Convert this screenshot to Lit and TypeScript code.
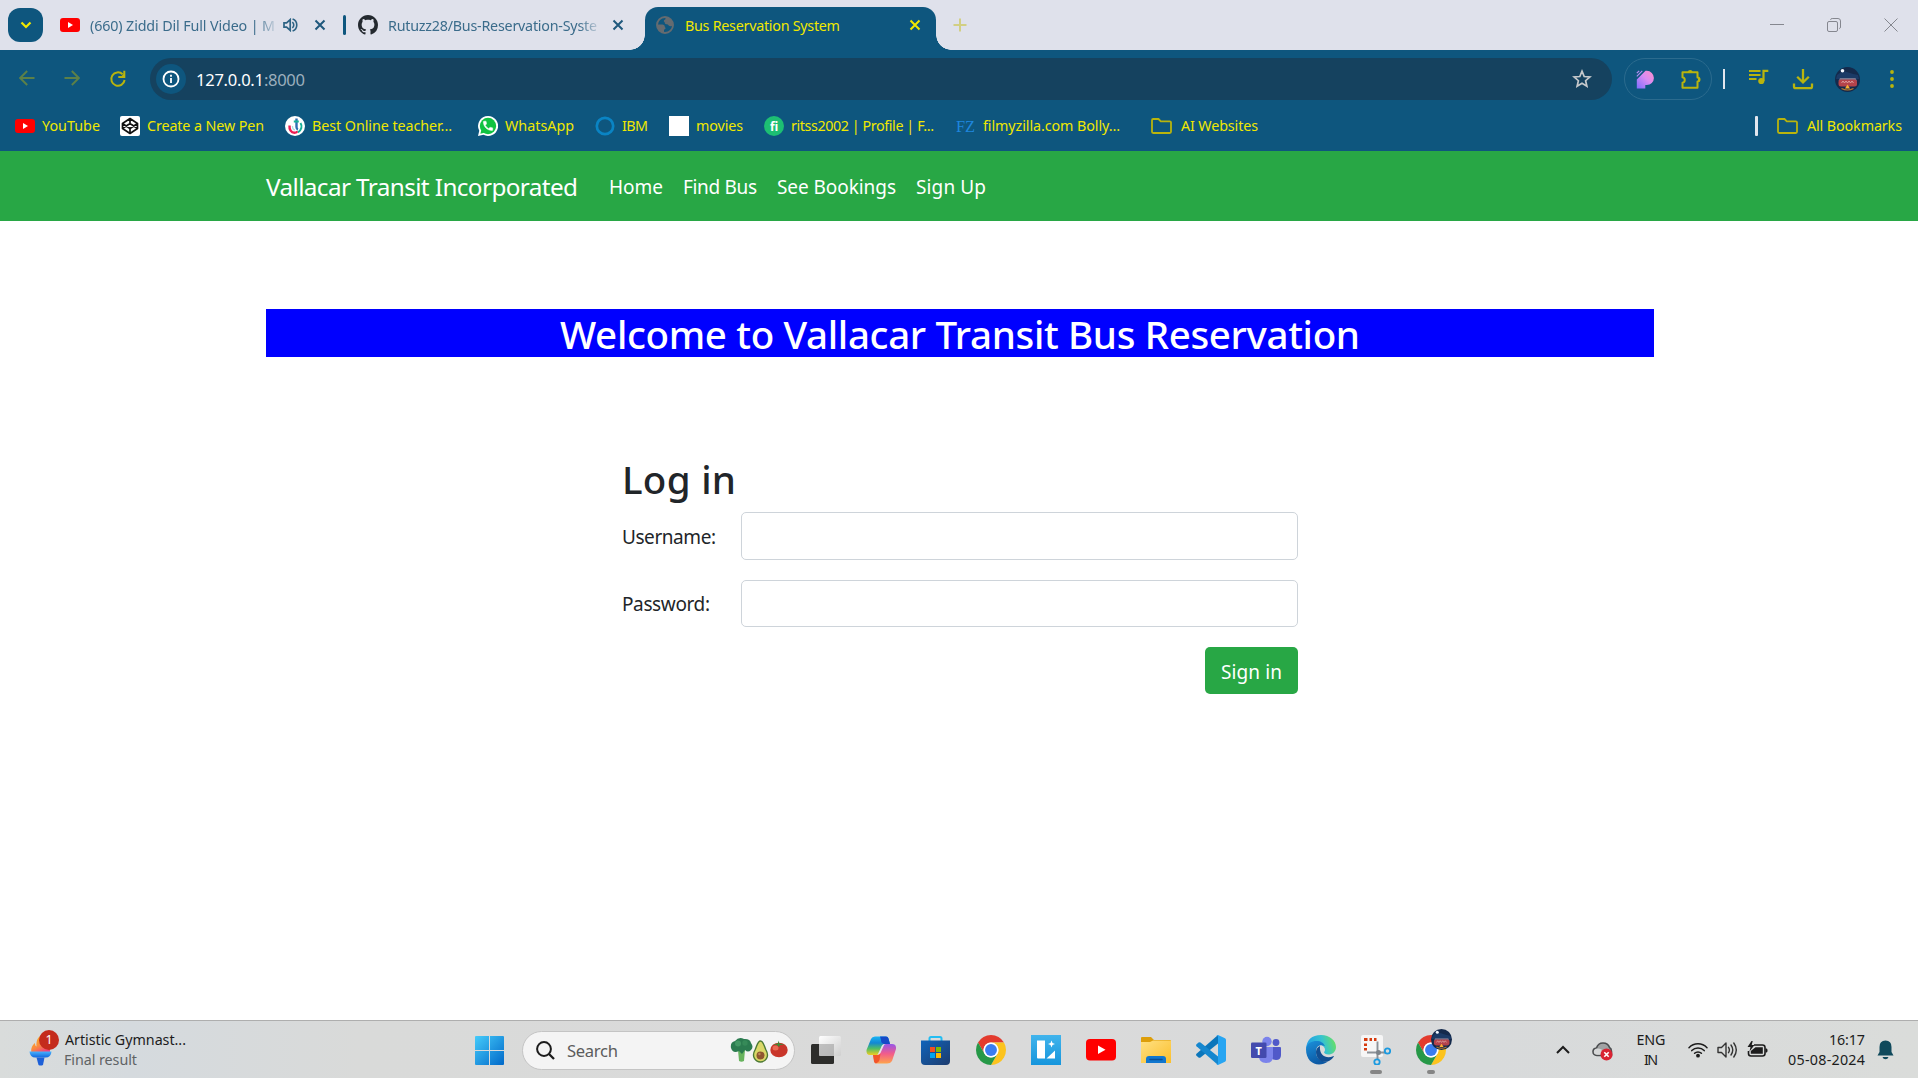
import { LitElement, html, css, svg, nothing } from "lit";
import type { PropertyValues, TemplateResult } from "lit";
import { customElement, property } from "lit/decorators.js";
import { classMap } from "lit/directives/class-map.js";

/* A single line of text whose tracking is adjusted so that it fills a given width. */
@customElement("ui-text")
class UiText extends LitElement {
  @property({ type: Number }) w = 0;
  @property() text = "";
  static styles = css`
    :host { display: block; white-space: nowrap; flex: none; }
    .line { display: inline-block; white-space: pre; }
  `;
  protected updated(_: PropertyValues) {
    const line = this.renderRoot.querySelector(".line") as HTMLElement;
    line.style.letterSpacing = "0px";
    this.style.width = `${this.w}px`;
    const natural = line.getBoundingClientRect().width;
    const steps = Math.max(1, this.text.length - 1);
    line.style.letterSpacing = `${(this.w - natural) / steps}px`;
  }
  render() {
    return html`<span class="line">${this.text}</span>`;
  }
}

const t = (text: string, w: number, cls = "") => html`<ui-text class=${cls} .text=${text} .w=${w}></ui-text>`;
const icon = (w: number, h: number, box: string, body: unknown, cls = "") =>
  html`<svg class=${"icon " + cls} width=${w} height=${h} viewBox=${box} fill="none">${body}</svg>`;

const youtube = (w = 20, h = 14) => icon(w, h, "0 0 20 14", svg`
  <rect width="20" height="14" rx="3" fill="#f00"/><path d="M8 4v6l5-3z" fill="#fff"/>`);

const github = icon(20, 20, "0 0 16 16", svg`<path fill="#24292f" d="M8 0C3.58 0 0 3.58 0 8c0 3.54 2.29 6.53 5.47 7.59.4.07.55-.17.55-.38 0-.19-.01-.82-.01-1.49-2.01.37-2.53-.49-2.69-.94-.09-.23-.48-.94-.82-1.13-.28-.15-.68-.52-.01-.53.63-.01 1.08.58 1.23.82.72 1.21 1.87.87 2.33.66.07-.52.28-.87.51-1.07-1.78-.2-3.64-.89-3.64-3.95 0-.87.31-1.59.82-2.15-.08-.2-.36-1.02.08-2.12 0 0 .67-.21 2.2.82.64-.18 1.32-.27 2-.27s1.36.09 2 .27c1.53-1.04 2.2-.82 2.2-.82.44 1.1.16 1.92.08 2.12.51.56.82 1.27.82 2.15 0 3.07-1.87 3.75-3.65 3.95.29.25.54.73.54 1.48 0 1.07-.01 1.93-.01 2.2 0 .21.15.46.55.38A8.01 8.01 0 0 0 16 8c0-4.42-3.58-8-8-8z"/>`);

const cross = (c: string) => icon(12, 12, "0 0 12 12", svg`<path d="M1.5 1.5l9 9M10.5 1.5l-9 9" stroke=${c} stroke-width="2"/>`);

const speaker = icon(15, 14, "0 0 15 14", svg`
  <path d="M1 4.8h2.6L7.2 1.6v10.8L3.6 9.2H1z" stroke="#2d6384" stroke-width="1.7"/>
  <path d="M9.3 4.2a3.4 3.4 0 0 1 0 5.6M9.6 1a6.4 6.4 0 0 1 0 12" stroke="#2d6384" stroke-width="1.6"/>`);

const globe = icon(18, 18, "0 0 18 18", svg`
  <circle cx="9" cy="9" r="8" stroke="#656b70" stroke-width="1.9"/>
  <path d="M1.2 8.5h5.2c1.5 0 2.4 1 2.4 2.2 0 .8.8.6.8 1.5 0 1-1.6.8-1.6 2v2.4C4 17 .8 13 1.200 8.500z" fill="#656b70"/>
  <path d="M9.500 1.200v1.600c0 1.200-1.700.9-1.700 2.100 0 .9 1 1 1 1.800 0 1 1 1.500 2.100 1.500 1.400 0 1.600 1.400 2.700 1.900 1 .4 2.300-.2 3.200-.6C17.200 4.500 14 1.200 9.500 1.200z" fill="#656b70"/>`);

const OLIVE = "#b9b40d";

const arrow = (flip: boolean) => icon(16, 16, "0 0 16 16",
  svg`<path transform=${flip ? "matrix(-1 0 0 1 16 0)" : ""} d="M15.500 8H1.500M8.200 1L1.200 8l7 7" stroke="#5c8048" stroke-width="1.900"/>`);

const reload = icon(18, 18, "0 0 18 18", svg`
  <path d="M13.600 4.200A6.700 6.700 0 1 0 15.600 10" stroke=${OLIVE} stroke-width="2"/>
  <path d="M15.300 .800v6.200H9.300" stroke=${OLIVE} stroke-width="2"/><path d="M15 3.500v3.200h-3.200z" fill=${OLIVE}/>`);

const info = icon(18, 18, "0 0 18 18", svg`
  <circle cx="9" cy="9" r="7.500" stroke="#fff" stroke-width="1.800"/>
  <path d="M9 8v5M9 4.800v2" stroke="#fff" stroke-width="1.800"/>`);

const star = icon(20, 20, "0 0 20 20", svg`
  <path d="M10 2.200l2.200 5.300 5.700.500-4.300 3.700 1.300 5.600L10 14.300l-4.900 3 1.300-5.600L2.100 8l5.700-.5z" stroke="#c6c9cc" stroke-width="1.700"/>`);

const pixelP = icon(18, 19, "0 0 18 19", svg`
  <defs><linearGradient id="pp" x1="1" y1="0" x2="0" y2="1"><stop offset="0" stop-color="#ff8fc9"/><stop offset=".45" stop-color="#d98cf2"/><stop offset="1" stop-color="#7d6cff"/></linearGradient></defs>
  <path d="M9.500.800h1.300a6.900 6.900 0 0 1 0 14.200H9.300v3.500H.800V9.500z" fill="url(#pp)"/>
  <path d="M.800 3.200L3.200.800M.800 6.300L6.300.800" stroke="#b58df5" stroke-width="1.200"/>`);

const puzzle = icon(22, 22, "0 0 22 22", svg`
  <path d="M2.500 4.300h15v5.200a2 2 0 0 1 0 4v6.200h-15v-4.900a2.800 2.800 0 0 0 0-5.500z" stroke=${OLIVE} stroke-width="2" stroke-linejoin="round"/>
  <path d="M7.600 4a2.700 2.700 0 0 1 5.200 0zM18 9a2.600 2.600 0 0 1 0 5z" fill=${OLIVE}/>`);

const queue = icon(21, 16, "0 0 21 16", svg`
  <path d="M1 2h11.500M1 6h11.500M1 10h7.500" stroke=${OLIVE} stroke-width="2"/>
  <circle cx="13.300" cy="12" r="3.100" fill=${OLIVE}/><path d="M15.500 12V1.900h4.800" stroke=${OLIVE} stroke-width="2.200"/>`);

const download = icon(22, 21, "0 0 22 21", svg`
  <path d="M11 0v13M5.200 7.800L11 13.500l5.800-5.700" stroke=${OLIVE} stroke-width="2.300"/>
  <path d="M2 14.500v3q0 1.700 1.700 1.700h14.600q1.700 0 1.700-1.700v-3" stroke=${OLIVE} stroke-width="2.300"/>`);

const avatar = (s: number) => icon(s, s, "0 0 25 25", svg`
  <circle cx="12.500" cy="12.500" r="12.500" fill="#142a4c"/>
  <path d="M2 8q5-5 10-3t11 3l1 4H1z" fill="#1b3a66"/>
  <circle cx="7.500" cy="3.800" r="1.800" fill="#f4f8ff"/>
  <path d="M5 11h15.500l1.500 3H3.500z" fill="#75768f"/>
  <rect x="3.500" y="12.500" width="18.500" height="7" rx="2.500" fill="#b5434b"/>
  <path d="M6.500 16l1.500-2 1.500 2 1.500-2 1.500 2 1.500-2 1.500 2 1.500-2 1.500 2" stroke="#e0a3a2" stroke-width=".9"/>
  <path d="M10 21.500l2.500-4 2.500 4z" fill="#ffb02e"/><path d="M6.500 21.500q6 3 12 0" stroke="#b97a2c" stroke-width="1.200"/>`);

const dots = icon(6, 20, "0 0 6 20", svg`<g fill=${OLIVE}><circle cx="3" cy="3" r="1.900"/><circle cx="3" cy="10" r="1.900"/><circle cx="3" cy="17" r="1.900"/></g>`);

const folder = icon(21, 16, "0 0 21 16", svg`
  <path d="M1 2.200Q1 1 2.200 1h5.300l2.300 2.300h9Q20 3.300 20 4.500v9.300q0 1.200-1.200 1.200H2.200Q1 15 1 13.800z" stroke=${OLIVE} stroke-width="1.800"/>`);

const codepen = icon(20, 20, "0 0 20 20", svg`
  <rect width="20" height="20" rx="2" fill="#fff"/>
  <path d="M10 2.500l7.500 5v5l-7.500 5-7.500-5v-5zM10 2.500v5M10 12.500v5M2.500 7.500l7.500 5 7.500-5M2.500 12.500l7.500-5 7.500 5" stroke="#111" stroke-width="1.700" stroke-linejoin="round"/>`);

const teacher = icon(20, 20, "0 0 20 20", svg`
  <circle cx="10" cy="10" r="10" fill="#fff"/>
  <path d="M4.500 9.500c-.3 4 1.500 7.200 5 7.200 1.500 0 2.500-.5 3-1.500" stroke="#ee1d52" stroke-width="2.400"/>
  <path d="M7.500 10c0 2.500.8 3.800 2.500 3.800" stroke="#a9dfe0" stroke-width="1.300"/>
  <path d="M11.500 2.500V11q0 2 1.500 2.500" stroke="#2f6fb3" stroke-width="2.400"/>
  <path d="M8.800 5.500h5M15.500 7c2 3 1 7.500-2.500 9.300" stroke="#15b097" stroke-width="2"/>`);

const whatsapp = icon(20, 20, "0 0 24 24", svg`
  <path d="M12 0a12 12 0 1 1-5.500 22.600L0 24l1.500-6.200A12 12 0 0 1 12 0z" fill="#fff"/>
  <circle cx="12" cy="12" r="9.800" fill="#10c240"/><path d="M2.800 21.300l1.400-5 3.500 3.800z" fill="#10c240"/>
  <path transform="translate(4.600 4.400) scale(.62)" fill="#fff" stroke="#fff" d="M6.620 10.790c1.440 2.830 3.760 5.140 6.590 6.590l2.200-2.200c.27-.27.67-.36 1.020-.24 1.120.37 2.330.57 3.570.57.55 0 1 .45 1 1V20c0 .55-.45 1-1 1-9.390 0-17-7.610-17-17 0-.55.45-1 1-1h3.500c.55 0 1 .45 1 1 0 1.250.2 2.450.57 3.570.11.35.03.74-.25 1.020l-2.200 2.200z"/>`);

const ring = icon(20, 20, "0 0 20 20", svg`<circle cx="10" cy="10" r="8.200" stroke="#0a84c4" stroke-width="2.700"/>`);
const blank = icon(20, 20, "0 0 20 20", svg`<rect width="20" height="20" fill="#fff"/>`);
const fiverr = icon(20, 20, "0 0 20 20", svg`<circle cx="10" cy="10" r="10" fill="#1dbf73"/><text class="fi" x="10" y="14.500" text-anchor="middle">fi</text>`);
const fz = icon(20, 20, "0 0 20 20", svg`<text class="fz" x="0" y="16" textLength="19" lengthAdjust="spacingAndGlyphs">FZ</text>`);

/* Taskbar artwork, drawn on 30 x 30 tiles */
const tile = (body: unknown) => icon(30, 30, "0 0 30 30", body);

const torch = icon(24, 38, "0 0 24 38", svg`
  <defs><linearGradient id="fl" x1="0" y1="0" x2=".6" y2="1"><stop offset="0" stop-color="#f8b51b"/><stop offset=".6" stop-color="#fb8b3e"/><stop offset="1" stop-color="#f0417d"/></linearGradient>
  <linearGradient id="tc" x1="0" y1="0" x2="0" y2="1"><stop offset="0" stop-color="#48b2ff"/><stop offset="1" stop-color="#1467dd"/></linearGradient></defs>
  <path d="M2.500 24c-1-5 1-8 3.500-10 0 2 .4 3 1.500 3.500C7 11 9 8 13 6v4l8 8v6z" fill="url(#fl)"/>
  <path d="M.500 22.500h22q-.5 6-6 6h-10q-5.500 0-6-6z" fill="url(#tc)"/><path d="M7.500 28.500h8l-1.500 7.500q-2.500 1.200-4.500 0z" fill="#1d60d8"/>`);

const windows = tile(svg`
  <defs><linearGradient id="wn" x1="0" y1="0" x2="30" y2="30" gradientUnits="userSpaceOnUse"><stop stop-color="#46cdfb"/><stop offset="1" stop-color="#0067c8"/></linearGradient></defs>
  <path d="M0 2q0-1 1-1h13v14H0zM15 1h13q1 0 1 1v13H15zM0 16h14v14H1q-1 0-1-1zM15 16h14v13q0 1-1 1H15z" fill="url(#wn)"/>`);

const taskView = tile(svg`
  <defs><linearGradient id="tv" x1="0" y1="0" x2="1" y2="1"><stop stop-color="#fff"/><stop offset="1" stop-color="#cfcfcf"/></linearGradient></defs>
  <rect x="0" y="9" width="23" height="20" rx="1.500" fill="#2d2d2b"/>
  <rect x="8" y="1" width="22" height="20" rx="1.500" fill="url(#tv)"/><path d="M8 9h15v12H8z" fill="#a4a4a4" opacity=".65"/>`);

const copilot = tile(svg`
  <defs><linearGradient id="c1" x1="0" y1="0" x2="0" y2="1"><stop stop-color="#18b5f5"/><stop offset=".35" stop-color="#1287d4"/><stop offset=".65" stop-color="#4fbd66"/><stop offset="1" stop-color="#f0cd21"/></linearGradient>
  <linearGradient id="c2" x1="0" y1="0" x2="0" y2="1"><stop stop-color="#9656e8"/><stop offset=".5" stop-color="#f25c8b"/><stop offset="1" stop-color="#ffa44b"/></linearGradient></defs>
  <path d="M9 1.500h11q2 0 2.500 2L24 9h-6l-4 9q-1 2-3 2H4q-4 0-3.500-5L5 4q1-2.500 4-2.500z" fill="url(#c1)"/>
  <path d="M14 1.500h6q2 0 2.500 2L24 9h-6q-3-.5-3-4z" fill="#1649c7"/>
  <path d="M21 28.500H11q-2 0-2.700-2L7 20h5l5-9q1-2 3-2h6q4.500 0 4 5l-4 12q-1.500 2.500-5 2.500z" fill="url(#c2)"/>
  <path d="M15 12.500q1-3.500 3.500-3.500l-4 9q-1 2-3 2z" fill="#e4e1e6"/>
  <path d="M7 20h5q1.500-.3 2.500-1.500L13.500 25q-1 3-3.500 3.500-1.500 0-2-2z" fill="#f2552b"/>`);

const store = tile(svg`
  <defs><linearGradient id="st" x1="0" y1="0" x2="1" y2="1"><stop stop-color="#1164bb"/><stop offset="1" stop-color="#1d3c6e"/></linearGradient></defs>
  <path d="M8.500 7V3.500Q8.500 2 10 2h9q1.500 0 1.500 1.500V7" stroke="#23bdf2" stroke-width="2"/>
  <path d="M0 5.500h29V26q0 4-4 4H4q-4 0-4-4z" fill="url(#st)"/>
  <path fill="#f25022" d="M9 12h5v5H9z"/><path fill="#7fba00" d="M15 12h5v5h-5z"/><path fill="#00a4ef" d="M9 18h5v5H9z"/><path fill="#ffb900" d="M15 18h5v5h-5z"/>`);

const chrome = icon(30, 30, "2 2 44 44", svg`
  <path fill="#e33b2e" d="M24 13h19.050A22 22 0 0 0 4.950 13l9.520 16.500A11 11 0 0 1 24 13z"/>
  <path fill="#fcc31e" d="M24 13H43.050A22 22 0 0 1 24 46L33.530 29.500A11 11 0 0 0 24 13z"/>
  <path fill="#269847" d="M4.950 13L14.470 29.500A11 11 0 0 0 33.530 29.500L24 46A22 22 0 0 1 4.950 13z"/>
  <circle cx="24" cy="24" r="11" fill="#fff"/><circle cx="24" cy="24" r="8.700" fill="#3a7df0"/>`);

const blueL = tile(svg`
  <defs><linearGradient id="bl" x1="0" y1="0" x2="0" y2="1"><stop stop-color="#41b4ec"/><stop offset="1" stop-color="#1695dc"/></linearGradient></defs>
  <path fill="url(#bl)" d="M0 0h30v30H0z"/><path d="M6 5.500h8v18H7q-1 0-1-1z" fill="#fff"/><path d="M24 15.500v8h-8.500z" fill="#fff"/>
  <path d="M20.500 5.500l1 2.500 2.500 1-2.500 1-1 2.500-1-2.500-2.500-1 2.500-1z" fill="#fff"/>`);

const youtubeTile = tile(svg`<rect y="4" width="30" height="21.500" rx="4" fill="#f00"/><path d="M12 10.500v8.500l7.500-4.250z" fill="#fff"/>`);

const explorer = tile(svg`
  <defs><linearGradient id="ex" x1="0" y1="0" x2="1" y2="1"><stop stop-color="#ffe082"/><stop offset="1" stop-color="#fbbf2c"/></linearGradient></defs>
  <path d="M0 3q0-1 1-1h9l3 3h16q1 0 1 1v4H0z" fill="#dd9e0a"/><path d="M0 7h9l3-1.500h18V28H0z" fill="url(#ex)"/>
  <path d="M5 28v-4q0-3 3-3h14q3 0 3 3v4z" fill="#1177cf"/><path d="M9 24.500h12" stroke="#0b4f95" stroke-width="1.500" stroke-linecap="round"/>`);

const vscode = tile(svg`
  <path d="M22 0v8.500L4.500 22.500q-1 .6-2 0L.5 20.700q-.9-1 0-2z" fill="#0b76bb"/>
  <path d="M22 30v-8.500L4.500 7.500q-1-.6-2 0L.5 9.300q-.9 1 0 2z" fill="#1587cf"/>
  <path d="M22 0l7 3.200q1 .6 1 1.800v20q0 1.200-1 1.800L22 30q-1.200 0-1.800-1 1.800.7 1.800-1.200V2.200Q22 .3 20.200 1 21 0 22 0z" fill="#27a5f2"/>`);

const teams = tile(svg`
  <circle cx="16" cy="6.500" r="4.700" fill="#7b83eb"/><circle cx="25" cy="7.500" r="3.400" fill="#5059c9"/>
  <path d="M20 12h9q1 0 1 1v7q0 5-5 5-3 0-5-2z" fill="#5059c9"/><path d="M8 12h14v9.500q0 6.500-7 6.500t-7-6.500z" fill="#7b83eb"/>
  <rect y="7.500" width="15.500" height="15.500" rx="1.300" fill="#434aae"/><text class="teams" x="7.750" y="19.500" text-anchor="middle">T</text>`);

const edge = tile(svg`
  <defs><linearGradient id="e1" x1="0" y1=".4" x2="1" y2=".2"><stop stop-color="#1f9de6"/><stop offset=".55" stop-color="#36c3cf"/><stop offset="1" stop-color="#6ce35a"/></linearGradient>
  <linearGradient id="e2" x1="0" y1="0" x2=".4" y2="1"><stop stop-color="#1b91db"/><stop offset="1" stop-color="#0c59a4"/></linearGradient></defs>
  <path d="M0 14Q1 0 15 0c9 0 15 6 15 12 0 5-4 7.500-7.500 7.500-3 0-5-1-4.500-2.500 1.500-2 1-4-.5-5.500Q10 4 0 14z" fill="url(#e1)"/>
  <path d="M0 14C1 8 6 6 10.500 6c4.500 0 7 2 8.500 5-6-2-9 1-9 6 0 7 6 10 12 9.500C13 33 0 29 0 14z" fill="url(#e2)"/>
  <path d="M14 11c-4 1.500-5 6-3 10.500 2.500 6 9 6 12 4.500 2-1 4-3 4.700-4.200.4-.8 0-1-.7-.6C21 24 13 21 14 11z" fill="#124f92"/>
  <path d="M15.500 11.500c-2 3.500.5 7.700 6 7.900-3-.6-4-1.900-3.200-3 .9-1.500.5-3.700-2.800-4.900z" fill="#dadada"/>`);

const snip = tile(svg`
  <rect width="22" height="22" rx="2" fill="#f6f6f6"/>
  <path d="M4.500 15.500V13M4.500 11V8.500M3 4.600h3.500M8.500 4.600H11M13 4.600h2.500" stroke="#d63b0e" stroke-width="3"/>
  <path d="M16.500 6.500v18M6 17.500h18.500" stroke="#8c9298" stroke-width="1.900"/><circle cx="17.500" cy="17.500" r="2.500" fill="#7d848a"/>
  <circle cx="26.500" cy="16" r="2.700" stroke="#1b9ae0" stroke-width="1.800"/><circle cx="16" cy="27" r="2.700" stroke="#1b9ae0" stroke-width="1.800"/>`);

const magnifier = icon(19, 19, "0 0 19 19", svg`<circle cx="8" cy="8" r="6.900" stroke="#1c1c1c" stroke-width="2"/><path d="M13 13l5 5" stroke="#1c1c1c" stroke-width="2.300"/>`);

const veg = icon(58, 27, "0 0 58 27", svg`
  <path d="M8 13h7l-1 11q-2.500 1.500-5 0z" fill="#67b35d"/>
  <path d="M1 11Q0 5 5 4q4-5 9-2 6-.5 7 4 3 4 0 7-3 3-6 0l-3 4-3-3q-6 3-8-3z" fill="#2b7b4f"/>
  <circle cx="8" cy="6.500" r="3" fill="#429763"/><circle cx="15" cy="6" r="2.700" fill="#368a58"/>
  <path d="M30.500 4c3 0 3.500 5 5.500 9 4 7-1 12-5.500 12s-9.500-5-5.500-12c2-4 2.500-9 5.500-9z" fill="#dbd868" stroke="#4c7a35" stroke-width="1.400"/>
  <circle cx="30.500" cy="18.500" r="4" fill="#8f5730"/><circle cx="29.400" cy="17" r="1.200" fill="#c0885a"/>
  <ellipse cx="49" cy="13" rx="8.700" ry="7.300" fill="#c9362a"/><ellipse cx="45.500" cy="11" rx="3" ry="2.500" fill="#ea6a52"/>
  <path d="M43 7.500l5-1V3.500l1.500 3 5 1-4.500.5-1 2-2-2z" fill="#3d8a36"/>`);

const caret = icon(14, 9, "0 0 14 9", svg`<path d="M1 8l6-6 6 6" stroke="#1c1c1c" stroke-width="2"/>`);
const cloud = icon(21, 20, "0 0 21 20", svg`
  <path d="M5 14.500Q1 14 1 10.500 1 7.500 4.500 7 6 2 11 2q5 0 6.500 4.500 2 1 2 4v4z" fill="#a0a2a3" stroke="#4b4d4f" stroke-width="1.600"/>
  <path d="M1.800 11Q2 8 5.500 7.600 9 7.500 14 12l-4 1.700H5q-3 0-3.200-2.700z" fill="#d6d7d7"/>
  <circle cx="14.500" cy="13.500" r="6" fill="#d92332"/><path d="M12.300 11.300l4.400 4.400M16.700 11.300l-4.400 4.400" stroke="#fff" stroke-width="1.600"/>`);
const wifi = icon(20, 16, "0 0 20 16", svg`
  <g stroke="#1c1c1c" stroke-width="1.500" stroke-linecap="round"><path d="M1 5.700a12.500 12.500 0 0 1 18 0M3.800 8.600a8.600 8.600 0 0 1 12.400 0M6.600 11.300a4.800 4.800 0 0 1 6.800 0"/></g><circle cx="10" cy="13.700" r="1.900" fill="#1c1c1c"/>`);
const volume = icon(21, 18, "0 0 21 18", svg`
  <path d="M1 6.500h3.500L9 2v14l-4.500-4.500H1z" stroke="#333" stroke-width="1.400" stroke-linejoin="round"/>
  <path d="M11.500 6.300q1.800 2.700 0 5.400M14 4q3.500 5 0 10M16.800 2q5 7 0 14" stroke="#333" stroke-width="1.400" stroke-linecap="round"/>`);
const battery = icon(21, 17, "0 0 21 17", svg`
  <path d="M7 4h8.500Q18 4 18 6.500v6q0 2.500-2.500 2.500H4q-2.500 0-2.500-2.500V10" stroke="#1c1c1c" stroke-width="1.600"/>
  <path d="M8.500 6.300h7.300v6.400H3.800V10z" fill="#1c1c1c"/><path d="M18.500 7.500h1q1 0 1 2t-1 2h-1z" fill="#1c1c1c"/>
  <path d="M4.500 0L.5 6h3l-1 4.500L7.500 4H4.700l1-4z" fill="#1c1c1c"/>`);
const bell = icon(17, 20, "0 0 17 20", svg`
  <path d="M8.500.500q6 0 6 6.500v5l2 3.500H.500l2-3.500V7q0-6.500 6-6.500zM5.500 17h6q-.7 2.300-3 2.300t-3-2.300z" fill="#104a5c"/>`);

interface Bookmark { icon: TemplateResult; label: string; w: number; slot: number; }
const bookmarks: Bookmark[] = [
  { icon: youtube(), label: "YouTube", w: 58, slot: 58 },
  { icon: codepen, label: "Create a New Pen", w: 117, slot: 118 },
  { icon: teacher, label: "Best Online teacher...", w: 140, slot: 146 },
  { icon: whatsapp, label: "WhatsApp", w: 69, slot: 70 },
  { icon: ring, label: "IBM", w: 26, slot: 27 },
  { icon: blank, label: "movies", w: 47, slot: 48 },
  { icon: fiverr, label: "ritss2002 | Profile | F...", w: 143, slot: 145 },
  { icon: fz, label: "filmyzilla.com Bolly...", w: 137, slot: 148 },
];

@customElement("browser-chrome")
class BrowserChrome extends LitElement {
  static styles = css`
    :host { display: block; height: 151px; background: #0e567e; color: #f0e800; font: 14.300px/20px "Noto Sans", "Open Sans", sans-serif; }
    * { box-sizing: border-box; }
    .icon { display: block; flex: none; }
    .tabs { display: flex; align-items: center; height: 50px; background: #dfe1eb; color: #3b6c8b; }
    .search { display: grid; place-items: center; width: 35px; height: 34px; margin-left: 8px; border-radius: 12px; background: #0e567e; }
    .tab { display: flex; align-items: center; height: 50px; flex: none; }
    .first { width: 300px; padding-left: 17px; }
    .second { width: 299px; padding-left: 12px; }
    .clip { margin-left: 10px; margin-top: 2px; }
    .clip-a { width: 185px; -webkit-mask-image: linear-gradient(90deg, #000 90%, transparent 102%); mask-image: linear-gradient(90deg, #000 90%, transparent 102%); }
    .clip-b { width: 210px; -webkit-mask-image: linear-gradient(90deg, #000 91%, transparent 102%); mask-image: linear-gradient(90deg, #000 91%, transparent 102%); }
    .mute { margin-left: 8px; margin-right: 16px; display: flex; }
    .bar { width: 3px; height: 20px; border-radius: 2px; background: #0e567e; flex: none; }
    .gap-b { margin-left: 14px; }
    .active { position: relative; width: 291px; height: 43px; margin-top: 7px; padding: 0 15px 7px 11px; background: #0e567e; border-radius: 13px 13px 0 0; color: #f0e800; }
    .active::before, .active::after { content: ""; position: absolute; bottom: 0; width: 15px; height: 15px; }
    .active::before { left: -15px; background: radial-gradient(circle at 0 0, transparent 14.500px, #0e567e 15px); }
    .active::after { right: -15px; background: radial-gradient(circle at 100% 0, transparent 14.500px, #0e567e 15px); }
    .title { margin-left: 11px; margin-right: auto; margin-top: 1px; }
    .plus { margin-left: 17px; }
    .controls { display: flex; gap: 43px; margin-left: auto; margin-right: 20px; align-items: center; }
    .tools { display: flex; align-items: center; height: 58px; padding-left: 19px; }
    .nav { display: flex; gap: 29px; width: 131px; }
    .omni { display: flex; align-items: center; width: 1462px; height: 42px; padding: 0 20px 0 6px; border-radius: 21px; background: #15425f; }
    .site { display: grid; place-items: center; width: 30px; height: 30px; border-radius: 50%; background: #0e567e; margin-right: 10px; }
    .url { display: flex; font-size: 16.600px; color: #fff; margin-right: auto; padding-top: 1px; }
    .port { color: #9cafbd; }
    .ext { display: flex; align-items: center; width: 88px; height: 42px; margin-left: 12px; padding-left: 11px; gap: 26px; border: 1px solid #2b6b8e; border-radius: 21px; }
    .line { width: 2px; height: 20px; margin-left: 11px; background: #e2e6ee; }
    .line.wide { width: 3px; margin-left: auto; margin-right: 19px; border-radius: 1px; }
    .queue { margin-left: 23px; margin-top: -4px; }
    .down { margin-left: 23px; }
    .face { margin-left: 21px; }
    .more { margin-left: 29px; }
    .marks { display: flex; align-items: center; height: 36px; padding: 0 16px 0 15px; }
    .mark { display: flex; align-items: center; gap: 7px; margin-right: 20px; }
    .slot { flex: none; }
    .last { gap: 9px; margin-right: 0; }
    .fi { font: bold 12px "Noto Sans", sans-serif; fill: #fff; }
    .fz { font: 16px "Liberation Serif", serif; fill: #1f86dd; }
  `;
  render() {
    return html`
      <div class="tabs">
        <div class="search">${icon(12, 8, "0 0 12 8", svg`<path d="M1.500 1.500L6 6l4.500-4.500" stroke="#f0e800" stroke-width="2.200"/>`)}</div>
        <div class="tab first">
          ${youtube()}
          <div class="clip clip-a">${t("(660) Ziddi Dil Full Video | M", 185)}</div>
          <div class="mute">${speaker}</div>${cross("#1f587c")}
        </div>
        <div class="bar"></div>
        <div class="tab second">
          ${github}
          <div class="clip clip-b">${t("Rutuzz28/Bus-Reservation-Syste", 209)}</div>
          <div class="gap-b">${cross("#1f587c")}</div>
        </div>
        <div class="tab active">
          ${globe}${t("Bus Reservation System", 155, "title")}${cross("#f0e800")}
        </div>
        <div class="plus">${icon(14, 14, "0 0 14 14", svg`<path d="M7 .500v13M.500 7h13" stroke="#d2cf83" stroke-width="2"/>`)}</div>
        <div class="controls">
          ${icon(14, 14, "0 0 14 14", svg`<path d="M0 6.500h14" stroke="#85878f"/>`)}
          ${icon(14, 14, "0 0 14 14", svg`<rect x=".500" y="3.500" width="10" height="10" rx="1.500" stroke="#85878f"/><path d="M3.500 1.800q.3-1.300 1.700-1.300H11q2.500 0 2.500 2.500v6q0 1.200-1.200 1.700" stroke="#85878f"/>`)}
          ${icon(14, 14, "0 0 14 14", svg`<path d="M.500.500l13 13M13.500.500l-13 13" stroke="#85878f"/>`)}
        </div>
      </div>
      <div class="tools">
        <div class="nav">${arrow(false)}${arrow(true)}${reload}</div>
        <div class="omni">
          <div class="site">${info}</div>
          <div class="url">${t("127.0.0.1", 68)}${t(":8000", 41, "port")}</div>
          ${star}
        </div>
        <div class="ext">${pixelP}${puzzle}</div>
        <div class="line"></div>
        <div class="queue">${queue}</div>
        <div class="down">${download}</div>
        <div class="face">${avatar(25)}</div>
        <div class="more">${dots}</div>
      </div>
      <div class="marks">
        ${bookmarks.map((b) => html`<div class="mark">${b.icon}<div class="slot" style="width:${b.slot}px">${t(b.label, b.w)}</div></div>`)}
        <div class="mark last">${folder}${t("AI Websites", 77)}</div>
        <div class="line wide"></div>
        <div class="mark last">${folder}${t("All Bookmarks", 95)}</div>
      </div>`;
  }
}

@customElement("login-page")
class LoginPage extends LitElement {
  static styles = css`
    :host { display: block; height: 869px; background: #fff; color: #212529; font: 19px/30px "Noto Sans", "Open Sans", sans-serif; }
    * { box-sizing: border-box; }
    .navbar { display: flex; align-items: center; height: 70px; padding: 1px 0 0 266px; background: #28a745; color: #fff; gap: 20px; }
    .brand { font-size: 24.300px; margin-right: 11px; }
    .banner { display: flex; justify-content: center; align-items: center; width: 1388px; height: 48px; margin: 88px 0 0 266px; padding-top: 2px; background: #00f; color: #fff; font-size: 38.500px; font-weight: 500; line-height: 46px; }
    .form { width: 675px; margin: 98px 0 0 623px; }
    .heading { font-size: 38.500px; font-weight: 500; line-height: 48px; margin: 0 0 9px -1px; }
    .field { display: flex; align-items: center; height: 48px; margin-bottom: 20px; }
    .field.short { height: 47px; }
    .caption { width: 119px; margin-left: -1px; padding-top: 1px; }
    .input { width: 557px; height: 100%; padding: 0 15px; border: 1px solid #ced4da; border-radius: 5px; background: #fff; font: inherit; outline: none; }
    .actions { display: flex; justify-content: flex-end; }
    .button { display: flex; align-items: center; width: 93px; height: 47px; padding: 2px 16px 0; border: 0; border-radius: 5px; background: #28a745; color: #fff; font: inherit; }
  `;
  render() {
    const links: [string, number][] = [["Home", 54], ["Find Bus", 74], ["See Bookings", 119], ["Sign Up", 70]];
    return html`
      <div class="navbar">
        ${t("Vallacar Transit Incorporated", 312, "brand")}
        ${links.map(([label, w]) => t(label, w))}
      </div>
      <div class="banner">${t("Welcome to Vallacar Transit Bus Reservation", 800)}</div>
      <div class="form">
        ${t("Log in", 114, "heading")}
        <div class="field"><div class="caption">${t("Username:", 94)}</div><input class="input" type="text" /></div>
        <div class="field short"><div class="caption">${t("Password:", 88)}</div><input class="input" type="password" /></div>
        <div class="actions"><button class="button">${t("Sign in", 61)}</button></div>
      </div>`;
  }
}

@customElement("task-bar")
class TaskBar extends LitElement {
  static styles = css`
    :host { display: flex; align-items: center; height: 58px; border-top: 1px solid #aeaeae; background: linear-gradient(90deg, #d9dcdb 0, #d5dade 130px, #d9dad9 360px, #dadada 1000px, #d8dadb 1480px, #dadcda 1918px); color: #1c1c1c; font: 14.300px/20px "Noto Sans", "Open Sans", sans-serif; box-sizing: border-box; }
    * { box-sizing: border-box; }
    .icon { display: block; flex: none; }
    .widget { display: flex; width: 475px; padding-left: 29px; align-items: center; gap: 12px; }
    .torch { position: relative; margin-top: -3px; }
    .count { position: absolute; left: 10px; top: 1px; width: 20px; height: 20px; border-radius: 50%; background: #c42b1c; color: #fff; font-size: 12.500px; text-align: center; }
    .sub { color: #5f6365; margin-left: -1px; }
    .start-cell { width: 29px; margin-right: 18px; }
    .search { display: flex; align-items: center; width: 273px; height: 39px; border: 1px solid #c4c4c4; border-radius: 20px; background: #f4f4f4; padding: 0 6px 0 13px; margin-top: 1px; color: #5c5c5c; font-size: 16.600px; }
    .label { margin-left: 12px; margin-right: auto; padding-top: 1px; }
    .apps { display: flex; gap: 25px; margin-left: 16px; }
    .app { position: relative; width: 30px; height: 30px; }
    .running::after { content: ""; position: absolute; top: 35px; left: 11px; width: 8px; height: 4px; border-radius: 2px; background: #858585; }
    .focused::after { left: 9px; width: 12px; }
    .person { position: absolute; left: 15px; top: -6px; }
    .teams { font: bold 11px "Noto Sans", sans-serif; fill: #fff; }
    .tray { display: flex; align-items: center; margin-left: auto; padding-right: 24px; }
    .cloud { margin-left: 22px; margin-top: 3px; }
    .lang { width: 30px; margin-left: 23px; padding-top: 1px; display: flex; flex-direction: column; align-items: center; }
    .status { display: flex; align-items: center; gap: 9px; margin-left: 22px; margin-right: 19px; }
    .clock { display: flex; flex-direction: column; align-items: flex-end; width: 78px; margin-right: 12px; }
  `;
  render() {
    const apps: [TemplateResult, string][] = [
      [taskView, ""], [copilot, ""], [store, ""], [chrome, ""], [blueL, ""], [youtubeTile, ""], [explorer, ""],
      [vscode, ""], [teams, ""], [edge, ""], [snip, "focused"], [chrome, "profile"],
    ];
    return html`
      <div class="widget">
        <div class="torch">${torch}<div class="count">1</div></div>
        <div>${t("Artistic Gymnast...", 121)}${t("Final result", 73, "sub")}</div>
      </div>
      <div class="start-cell">${windows}</div>
      <div class="search">${magnifier}${t("Search", 51, "label")}${veg}</div>
      <div class="apps">
        ${apps.map(([art, kind]) => html`
          <div class=${classMap({ app: true, running: kind !== "", focused: kind === "focused" })}>
            ${art}${kind === "profile" ? html`<div class="person">${avatar(21)}</div>` : nothing}
          </div>`)}
      </div>
      <div class="tray">
        ${caret}
        <div class="cloud">${cloud}</div>
        <div class="lang">${t("ENG", 29)}${t("IN", 14)}</div>
        <div class="status">${wifi}${volume}${battery}</div>
        <div class="clock">${t("16:17", 36)}${t("05-08-2024", 77)}</div>
        ${bell}
      </div>`;
  }
}

@customElement("app-root")
class AppRoot extends LitElement {
  static styles = css`
    :host { display: block; width: 1918px; height: 1078px; overflow: hidden; }
  `;
  render() {
    return html`<browser-chrome></browser-chrome><login-page></login-page><task-bar></task-bar>`;
  }
}
